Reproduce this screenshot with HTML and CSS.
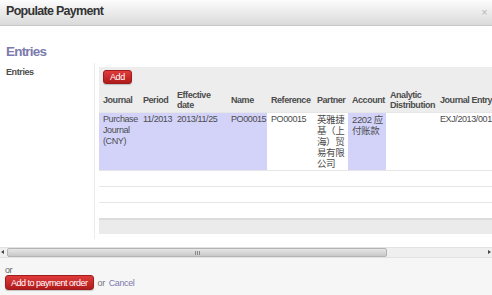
FILE: index.html
```html
<!DOCTYPE html>
<html lang="en">
<head>
  <meta charset="UTF-8" />
  <title>Populate Payment</title>
  <link rel="stylesheet" href="styles.css">
</head>
<body>
  <div class="dialog">
    <div class="dialog-header">
      <span class="dialog-title">Populate Payment</span>
      <span class="dialog-close">×</span>
    </div>

    <div class="dialog-body">
      <div class="sheet">
        <h2 class="section-title">Entries</h2>
        <div class="field-row">
          <div class="field-label">Entries</div>
          <div class="field-value">
            <table class="list">
              <colgroup>
                <col class="c-journal">
                <col class="c-period">
                <col class="c-date">
                <col class="c-name">
                <col class="c-ref">
                <col class="c-partner">
                <col class="c-account">
                <col class="c-analytic">
                <col class="c-entry">
              </colgroup>
              <thead>
                <tr class="list-buttons">
                  <td colspan="9"><button class="btn btn-red btn-small">Add</button></td>
                </tr>
                <tr class="list-head">
                  <th>Journal</th>
                  <th>Period</th>
                  <th>Effective date</th>
                  <th>Name</th>
                  <th>Reference</th>
                  <th>Partner</th>
                  <th>Account</th>
                  <th>Analytic Distribution</th>
                  <th>Journal Entry</th>
                </tr>
              </thead>
              <tbody>
                <tr class="row-data">
                  <td class="hl">Purchase Journal (CNY)</td>
                  <td class="hl">11/2013</td>
                  <td class="hl">2013/11/25</td>
                  <td class="hl">PO00015</td>
                  <td>PO00015</td>
                  <td class="cjk tight">英雅捷基（上海）贸易有限公司</td>
                  <td class="hl cjk tight">2202 应付账款</td>
                  <td></td>
                  <td>EXJ/2013/0013</td>
                </tr>
                <tr class="row-empty"><td colspan="9"></td></tr>
                <tr class="row-empty"><td colspan="9"></td></tr>
                <tr class="row-empty"><td colspan="9"></td></tr>
              </tbody>
              <tfoot>
                <tr><td colspan="9"></td></tr>
              </tfoot>
            </table>
          </div>
        </div>
      </div>
    </div>

    <div class="hscroll">
      <span class="arrow arrow-left"></span>
      <div class="track">
        <div class="thumb"><span class="grip"></span></div>
      </div>
      <span class="arrow arrow-right"></span>
    </div>

    <div class="dialog-footer">
      <div class="footer-or">or</div>
      <div class="footer-actions">
        <button class="btn btn-red">Add to payment order</button>
        <span class="muted">or</span>
        <a class="link" href="#">Cancel</a>
      </div>
    </div>
  </div>
</body>
</html>
```

FILE: styles.css
```css
body {
  margin: 0;
  background: #fff;
  font-family: "Liberation Sans", Arial, sans-serif;
  font-size: 9px;
  letter-spacing: -0.4px;
  color: #4c4c4c;
}

.dialog {
  width: 492px;
  height: 295px;
  overflow: hidden;
  display: flex;
  flex-direction: column;
}

.dialog-header {
  height: 26px;
  box-sizing: border-box;
  padding: 3px 5px 0 6px;
  display: flex;
  justify-content: space-between;
  align-items: flex-start;
  background: linear-gradient(#fcfcfc, #dadada);
  border-bottom: 1px solid #c6c6c6;
}

.dialog-title {
  font-size: 12.5px;
  line-height: 16px;
  letter-spacing: -0.7px;
  font-weight: bold;
  color: #333;
}

.dialog-close {
  font-size: 10px;
  line-height: 10px;
  margin-top: 5px;
  color: #b5b5b5;
}

.dialog-body {
  overflow: hidden;
  background: #fff;
  flex: none;
}

.sheet {
  width: 617px;
  padding: 18px 0 0 6px;
}

.section-title {
  margin: 0 0 3px 0;
  font-size: 13.5px;
  line-height: 16px;
  letter-spacing: -0.8px;
  font-weight: bold;
  color: #7c7bad;
}

.field-row {
  display: flex;
}

.field-label {
  width: 88px;
  flex: none;
  padding-top: 3px;
  border-right: 1px solid #ececec;
  font-weight: bold;
  line-height: 12px;
  color: #4c4c4c;
}

.field-value {
  flex: 1;
  padding: 4px 0 5px 4px;
}

/* list */

.list {
  width: 512px;
  table-layout: fixed;
  border-collapse: collapse;
  line-height: 11px;
}

.c-journal { width: 40px; }
.c-period { width: 34px; }
.c-date { width: 54px; }
.c-name { width: 40px; }
.c-ref { width: 46px; }
.c-partner { width: 35px; }
.c-account { width: 38px; }
.c-analytic { width: 50px; }
.c-entry { width: 175px; }

.list thead {
  background: #ededed;
}

.list-buttons td {
  padding: 3px 4px;
  height: 13px;
}

.list-head th {
  height: 22px;
  padding: 2px 4px 1px 4px;
  text-align: left;
  vertical-align: middle;
  font-weight: bold;
  color: #4c4c4c;
  line-height: 10px;
  letter-spacing: -0.45px;
  white-space: normal;
}

.list tbody tr {
  border-top: 1px solid #e6e6e6;
}

.row-data td {
  padding: 1px 4px;
  vertical-align: top;
  overflow: hidden;
}

.row-data td.hl {
  background: #d3d3fa;
}

.row-data td.cjk {
  font-family: "Liberation Sans", "Noto Sans CJK SC", sans-serif;
  font-size: 9.5px;
}

.row-data td.tight {
  padding-right: 1px;
}

.row-empty td {
  height: 15px;
  padding: 0;
}

.list tfoot td {
  height: 14px;
  padding: 0;
  background: #ebebeb;
  border-top: 2px solid #dcdcdc;
}

/* buttons */

.btn {
  font-family: inherit;
  border: 1px solid #9e1c1c;
  border-radius: 3px;
  color: #fff;
  cursor: pointer;
}

.btn-red {
  background: linear-gradient(#e03b3b, #b01b1b);
  font-size: 9px;
  letter-spacing: -0.4px;
  line-height: 12px;
  height: 15px;
  padding: 0 8px;
  box-shadow: 0 1px 1px rgba(0, 0, 0, 0.2);
}

.btn-small {
  height: 14px;
  padding: 0 6px;
}

/* horizontal scrollbar */

.hscroll {
  height: 9px;
  margin-top: 8px;
  display: flex;
  align-items: center;
  background: #efefef;
  border-top: 1px solid #e2e2e2;
  border-bottom: 1px solid #e2e2e2;
  flex: none;
}

.arrow {
  width: 7px;
  height: 9px;
  position: relative;
  flex: none;
}

.arrow::after {
  content: "";
  position: absolute;
  top: 2px;
  border-top: 2.5px solid transparent;
  border-bottom: 2.5px solid transparent;
}

.arrow-left::after {
  left: 1px;
  border-right: 3px solid #444;
}

.arrow-right::after {
  right: 1px;
  border-left: 3px solid #444;
}

.track {
  flex: 1;
  height: 9px;
}

.thumb {
  width: 380px;
  height: 9px;
  box-sizing: border-box;
  border: 1px solid #b4b4b4;
  border-radius: 2px;
  background: linear-gradient(#e6e6e6, #c8c8c8);
  display: flex;
  justify-content: center;
  align-items: center;
}

.grip {
  width: 5px;
  height: 4px;
  border-left: 1px solid #888;
  border-right: 1px solid #888;
  box-sizing: border-box;
  background: linear-gradient(90deg, transparent 1px, #888 1px, #888 2px, transparent 2px);
}

/* footer */

.dialog-footer {
  flex: 1;
  background: #f6f6f6;
  padding: 7px 5px 0 5px;
}

.footer-or {
  line-height: 10px;
  color: #666;
}

.footer-actions {
  display: flex;
  align-items: center;
  gap: 4px;
}

.footer-actions .btn-red {
  padding: 0 5px;
  letter-spacing: -0.5px;
}

.muted {
  color: #777;
}

.link {
  color: #7c7bad;
  text-decoration: none;
}
```
